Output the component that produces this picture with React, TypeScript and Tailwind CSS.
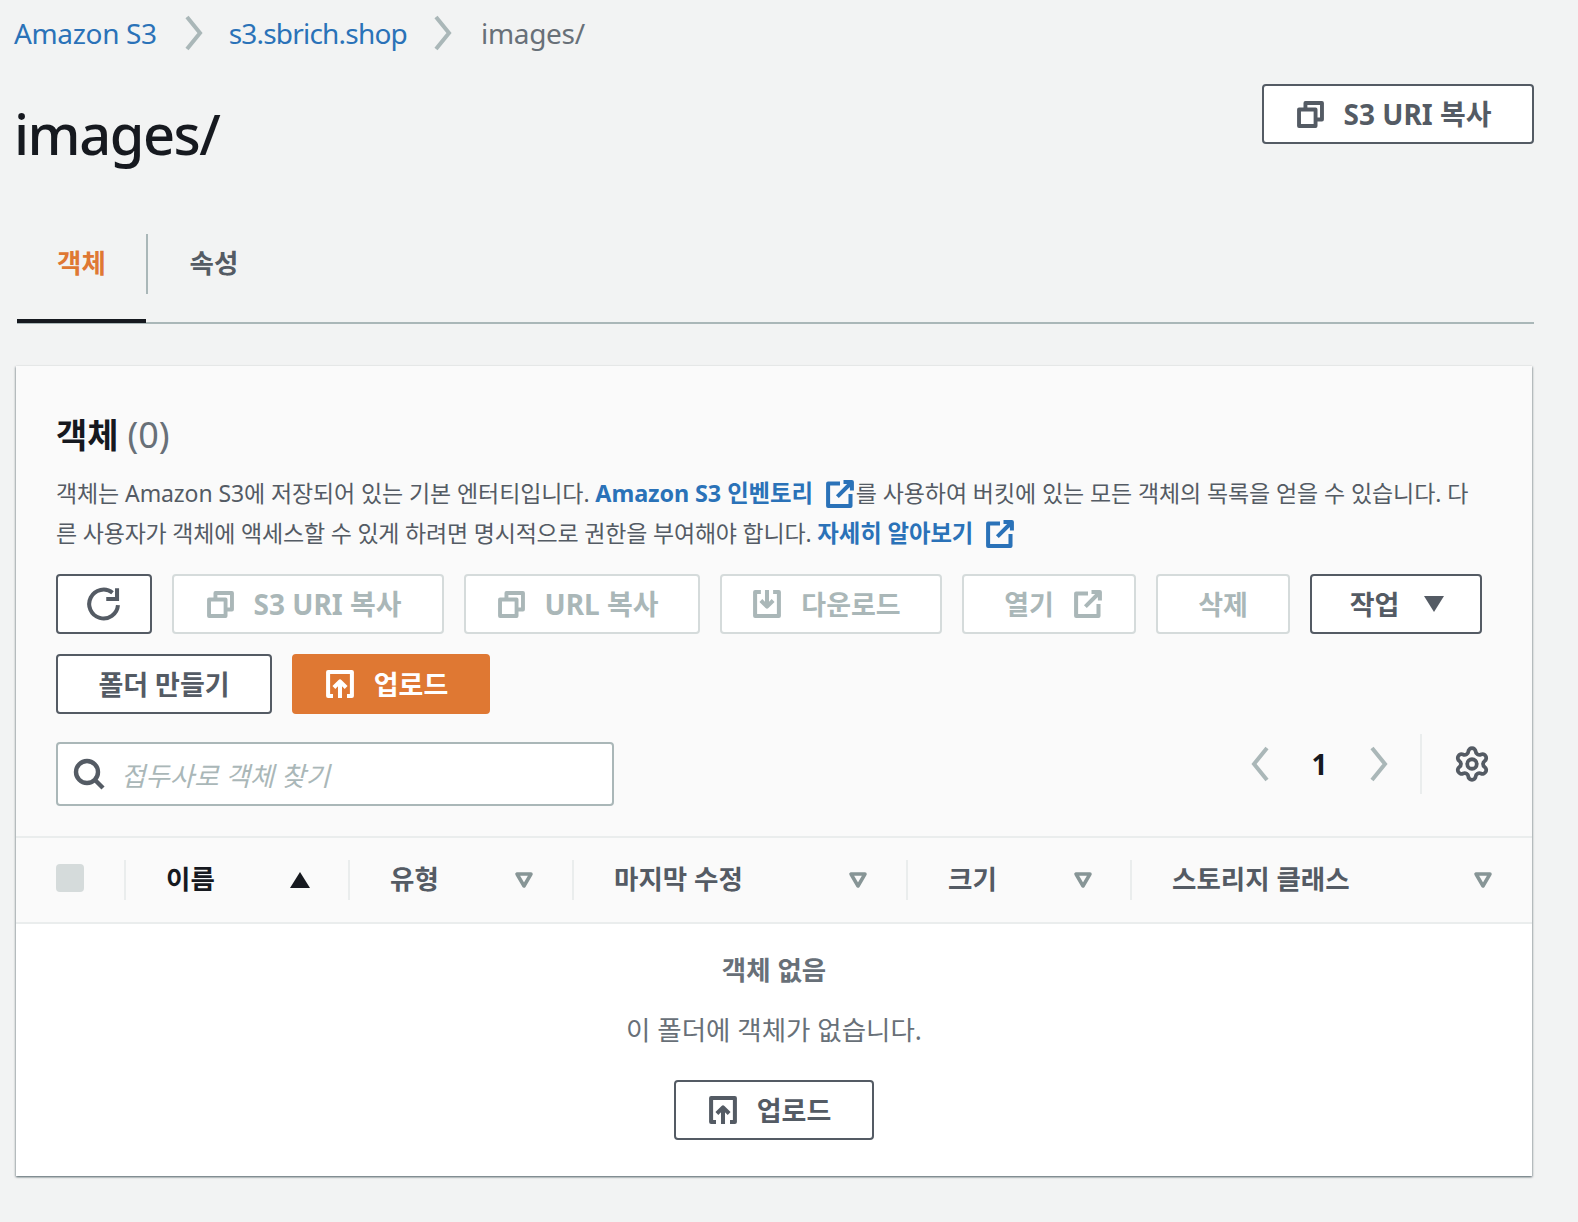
import React from 'react';
import { Settings } from 'lucide-react';

const font = "font-['Noto_Sans','Noto_Sans_CJK_KR',sans-serif]";

const CopyIcon = () => (
  <svg viewBox="0 0 16 16" className="w-[27px] h-[27px]" fill="none" stroke="currentColor" strokeWidth="2.3" strokeLinejoin="round">
    <rect x="1.2" y="5" width="9.8" height="9.8" />
    <path d="M5 5V1.2h9.8V11H11" />
  </svg>
);

const UploadIcon = () => (
  <svg viewBox="0 0 16 16" className="w-7 h-7" fill="none" stroke="currentColor" strokeWidth="2.3" strokeLinejoin="round">
    <path d="M4 14.8H1.2V1.2h13.6v13.6H12" />
    <path d="M8 16V6.5M4.5 10 8 6.5l3.5 3.5" />
  </svg>
);

const DownloadIcon = () => (
  <svg viewBox="0 0 16 16" className="w-7 h-7" fill="none" stroke="currentColor" strokeWidth="2.3" strokeLinejoin="round">
    <path d="M4.5 1.2H1.2v13.6h13.6V1.2h-3.3" />
    <path d="M8 0v9.5M4.5 6 8 9.5 11.5 6" />
  </svg>
);

const ExternalIcon = ({ className = 'w-7 h-7' }: { className?: string }) => (
  <svg viewBox="0 0 16 16" className={className} fill="none" stroke="currentColor" strokeWidth="2.3" strokeLinejoin="round">
    <path d="M8 2H1.2v12.8H14V8" />
    <path d="M6.5 9.5 15 1M10 1.2h4.8V6" />
  </svg>
);

const Chevron = ({ left = false }: { left?: boolean }) => (
  <svg viewBox="0 0 20 36" className="w-5 h-9" fill="none" stroke="#aab7b8" strokeWidth="4">
    <path d={left ? 'M17 2 4 18l13 16' : 'M3 2l13 16L3 34'} />
  </svg>
);

const SortDown = () => (
  <svg viewBox="0 0 20 18" className="w-5 h-[18px]" fill="none" stroke="#879596" strokeWidth="3.5" strokeLinejoin="round">
    <path d="M3 3h14l-7 12z" />
  </svg>
);

function Btn({ w, kind = 'normal', className = '', children }: { w: string; kind?: 'normal' | 'disabled' | 'primary'; className?: string; children: React.ReactNode }) {
  const look =
    kind === 'disabled'
      ? 'border-[#d5dbdb] bg-white text-[#aab7b8]'
      : kind === 'primary'
        ? 'border-[#df7833] bg-[#df7833] text-white'
        : 'border-[#545b64] bg-white text-[#545b64]';
  return (
    <div className={`${w} ${look} ${className} h-[60px] flex items-center justify-center gap-5 border-2 rounded-[4px] font-bold leading-none`}>
      {children}
    </div>
  );
}

const columns = [
  { label: '이름', width: 'w-[224px]', pad: 'pr-[38px]', active: true },
  { label: '유형', width: 'w-[224px]', pad: 'pr-[38px]' },
  { label: '마지막 수정', width: 'w-[334px]', pad: 'pr-[38px]' },
  { label: '크기', width: 'w-[224px]', pad: 'pr-[37px]' },
  { label: '스토리지 클래스', width: 'w-[391px]', pad: 'pr-[28px]' },
];

export default function App() {
  return (
    <div className={`${font} min-h-[1222px] bg-[#f2f3f3] pl-[14px] pr-[44px] pt-[15px] text-[#16191f]`}>
      <nav className="flex items-center h-9 text-[28px] leading-none">
        <span className="text-[#2a72b8] tracking-[-0.35px]">Amazon S3</span>
        <span className="ml-[27px] mr-[25px] flex"><Chevron /></span>
        <span className="text-[#2a72b8] tracking-[-0.8px]">s3.sbrich.shop</span>
        <span className="ml-[26px] mr-[28px] flex"><Chevron /></span>
        <span className="text-[#687078] tracking-[-0.3px]">images/</span>
      </nav>

      <div className="flex justify-between items-start mt-[33px]">
        <h1 className="mt-[14px] text-[56px] leading-[70px] font-medium tracking-[-1.5px]">images/</h1>
        <Btn w="w-[272px]" className="pr-2 text-[28px]"><CopyIcon />S3 URI 복사</Btn>
      </div>

      <div className="flex ml-[3px] mt-[66px] h-[90px] border-b-2 border-[#aab7b8]">
        <div className="relative w-[131px] h-[60px] border-r-2 border-[#aab7b8] flex items-center justify-center text-[26.5px] font-bold text-[#df7833]">
          객체
          <div className="absolute left-0 right-0 top-[85px] h-1 bg-[#16191f]" />
        </div>
        <div className="w-[132px] h-[60px] flex items-center justify-center text-[26.5px] font-bold text-[#545b64]">속성</div>
      </div>

      <div className="mt-[42px] ml-[2px] mr-[2px] bg-white shadow-[0_1px_2px_rgba(0,28,36,0.5),1px_1px_2px_rgba(0,28,36,0.15),-1px_1px_2px_rgba(0,28,36,0.15)]">
        <div className="bg-[#fafafa] px-10 pt-[46px] pb-[30px] border-b-2 border-[#eaeded]">
          <h2 className="text-[34px] leading-[46px] font-bold">
            객체 <span className="text-[36px] font-normal text-[#687078]">(0)</span>
          </h2>
          <p className="mt-[15px] mr-3 text-[23px] leading-10 tracking-[-0.1px] text-[#545b64]">
            객체는 Amazon S3에 저장되어 있는 기본 엔터티입니다.{' '}
            <span className="text-[23.4px] font-bold text-[#2a72b8]">
              Amazon S3 인벤토리
              <span className="inline-block align-[-6px] w-[30px] h-7 ml-[13px]"><ExternalIcon /></span>
            </span>
            를 사용하여 버킷에 있는 모든 객체의 목록을 얻을 수 있습니다. 다
            <span className="tracking-[-0.2px]">른 사용자가 객체에 액세스할 수 있게 하려면 명시적으로 권한을 부여해야 합니다.</span>{' '}
            <span className="text-[23.4px] font-bold text-[#2a72b8]">
              자세히 알아보기
              <span className="inline-block align-[-6px] w-[29px] h-7 ml-[13px]"><ExternalIcon /></span>
            </span>
          </p>

          <div className="mt-[21px] flex flex-wrap gap-5 w-[1436px]">
            <Btn w="w-[96px]">
              <svg viewBox="0 0 16 16" className="w-9 h-9" fill="none" stroke="currentColor" strokeWidth="1.8">
                <path d="M14.2 8.5A6.4 6.4 0 1 1 11.8 3" />
                <path d="M13.8 1v4.8H9" />
              </svg>
            </Btn>
            <Btn w="w-[272px]" kind="disabled" className="pr-2 text-[28px]"><CopyIcon />S3 URI 복사</Btn>
            <Btn w="w-[236px]" kind="disabled" className="pr-2 text-[28px]"><CopyIcon />URL 복사</Btn>
            <Btn w="w-[222px]" kind="disabled" className="pr-2 text-[27px]"><DownloadIcon />다운로드</Btn>
            <Btn w="w-[174px]" kind="disabled" className="pl-2 text-[27px]">열기<ExternalIcon /></Btn>
            <Btn w="w-[134px]" kind="disabled" className="text-[27px]">삭제</Btn>
            <Btn w="w-[172px]" className="gap-[25px] pl-[2px] text-[27px]">
              작업
              <svg viewBox="0 0 20 16" className="w-5 h-4" fill="currentColor"><path d="M0 0h20L10 16z" /></svg>
            </Btn>
            <Btn w="w-[216px]" className="text-[27px]">폴더 만들기</Btn>
            <Btn w="w-[198px]" kind="primary" className="pr-2 text-[27px]"><UploadIcon />업로드</Btn>
          </div>

          <div className="mt-7 flex justify-between items-start">
            <div className="w-[558px] h-16 flex items-center gap-4 bg-white border-2 border-[#aab7b8] rounded-[4px] pl-[15px]">
              <svg viewBox="0 0 16 16" className="w-8 h-8" fill="none" stroke="#545b64" strokeWidth="2.2">
                <circle cx="7" cy="7" r="5.5" />
                <path d="M11 11l4 4" />
              </svg>
              <span className="pt-[5px] text-[26.5px] italic text-[#aab7b8]">접두사로 객체 찾기</span>
            </div>
            <div className="flex items-center h-[60px] mt-[-8px] mr-[1px]">
              <Chevron left />
              <span className="w-[99px] text-center text-[28px] font-bold">1</span>
              <Chevron />
              <div className="w-0.5 h-[60px] bg-[#eaeded] ml-[31px] mr-[31px]" />
              <Settings size={38} strokeWidth={2.4} className="text-[#545b64]" />
            </div>
          </div>
        </div>

        <div className="h-[86px] flex items-center bg-[#fafafa] border-b-2 border-[#eaeded] pl-10 text-[26.5px] font-bold">
          <div className="w-[68px] flex items-center h-10">
            <div className="w-7 h-7 mb-1 rounded-[4px] bg-[#d5dbdb]" />
          </div>
          {columns.map((c) => (
            <div key={c.label} className={`${c.width} ${c.pad} h-10 flex items-center border-l-2 border-[#eaeded] pl-10 justify-between ${c.active ? 'text-[#16191f]' : 'text-[#545b64]'}`}>
              <span>{c.label}</span>
              {c.active ? (
                <svg viewBox="0 0 20 16" className="w-5 h-4 text-[#16191f]" fill="currentColor"><path d="M10 0l10 16H0z" /></svg>
              ) : (
                <SortDown />
              )}
            </div>
          ))}
        </div>

        <div className="h-[252px] flex flex-col items-center pt-[26px] text-[#687078]">
          <div className="text-[26.5px] leading-10 font-bold">객체 없음</div>
          <div className="mt-5 text-[26.5px] leading-10">이 폴더에 객체가 없습니다.</div>
          <div className="mt-[30px]">
            <Btn w="w-[200px]" className="pr-2 text-[27px]"><UploadIcon />업로드</Btn>
          </div>
        </div>
      </div>
    </div>
  );
}
